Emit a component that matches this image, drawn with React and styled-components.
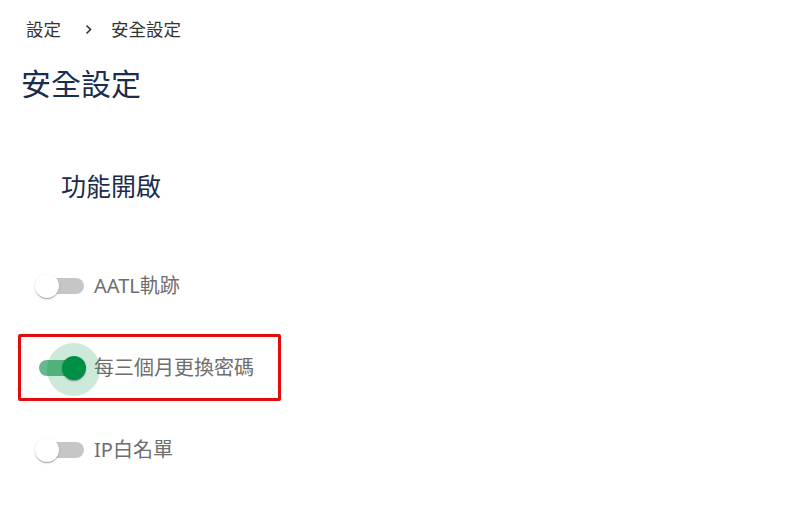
import React, { useState } from 'react';
import styled, { createGlobalStyle } from 'styled-components';

const GlobalStyle = createGlobalStyle`
  html, body {
    margin: 0;
    padding: 0;
    background: #ffffff;
  }
  body {
    font-family: "Noto Sans", "Noto Sans CJK TC", sans-serif;
  }
`;

const Page = styled.div`
  width: 787px;
  min-height: 517px;
  display: flex;
  flex-direction: column;
`;

const Breadcrumb = styled.nav`
  display: flex;
  align-items: center;
  padding: 17px 0 0 26px;
  height: 24px;
  font-size: 17.5px;
  line-height: 24px;
  color: #333333;
`;

const Crumb = styled.span`
  white-space: nowrap;
`;

const Separator = styled.span`
  display: flex;
  align-items: center;
  margin: 0 18px 0 24px;
`;

const Title = styled.h1`
  margin: 23px 0 0 21px;
  font-size: 30px;
  line-height: 40px;
  font-weight: 400;
  color: #1c2c4c;
`;

const SectionTitle = styled.h2`
  margin: 64px 0 0 61px;
  font-size: 25px;
  line-height: 36px;
  font-weight: 400;
  color: #1c2c4c;
`;

const Options = styled.div`
  display: flex;
  flex-direction: column;
  gap: 15px;
  margin: 48px 0 0 18px;
`;

const Row = styled.label`
  box-sizing: border-box;
  width: 263px;
  height: 67px;
  display: flex;
  align-items: center;
  gap: 10px;
  padding-left: 18px;
  border: 3px solid ${p => (p.$highlighted ? '#e30b0b' : 'transparent')};
  border-radius: 2px;
  cursor: pointer;
`;

const Track = styled.span`
  position: relative;
  flex: none;
  width: 45px;
  height: 16px;
  border-radius: 8px;
  background: ${p => (p.$on ? '#66b98a' : '#c6c6c6')};
`;

const Ripple = styled.span`
  position: absolute;
  left: 8px;
  top: -17px;
  width: 53px;
  height: 53px;
  border-radius: 50%;
  background: rgba(0, 143, 69, 0.2);
`;

const Thumb = styled.span`
  position: absolute;
  top: -4px;
  left: ${p => (p.$on ? '23px' : '-4px')};
  width: 24px;
  height: 24px;
  border-radius: 50%;
  background: ${p => (p.$on ? '#008f45' : '#ffffff')};
  box-shadow: 0 2px 1px -1px rgba(0, 0, 0, 0.2), 0 1px 1px 0 rgba(0, 0, 0, 0.14),
    0 1px 3px 0 rgba(0, 0, 0, 0.12);
`;

const Label = styled.span`
  font-size: 20px;
  line-height: 28px;
  color: #6e6e6e;
  white-space: nowrap;
`;

function Switch({ on, focused }) {
  return (
    <Track $on={on}>
      {focused && <Ripple />}
      <Thumb $on={on} />
    </Track>
  );
}

const OPTIONS = [
  { id: 'aatl', label: 'AATL軌跡', on: false },
  { id: 'pwd', label: '每三個月更換密碼', on: true, highlighted: true },
  { id: 'ip', label: 'IP白名單', on: false },
];

export default function App() {
  const [options, setOptions] = useState(OPTIONS);

  const toggle = id => {
    setOptions(options.map(o => (o.id === id ? { ...o, on: !o.on } : o)));
  };

  return (
    <Page>
      <GlobalStyle />
      <Breadcrumb>
        <Crumb>設定</Crumb>
        <Separator>
          <svg width="8" height="11" viewBox="0 0 8 11">
            <polyline points="1.5,1.5 5.5,5.5 1.5,9.5" fill="none" stroke="#333" strokeWidth="1.6" />
          </svg>
        </Separator>
        <Crumb>安全設定</Crumb>
      </Breadcrumb>
      <Title>安全設定</Title>
      <SectionTitle>功能開啟</SectionTitle>
      <Options>
        {options.map(o => (
          <Row key={o.id} $highlighted={o.highlighted} onClick={() => toggle(o.id)}>
            <Switch on={o.on} focused={o.highlighted} />
            <Label>{o.label}</Label>
          </Row>
        ))}
      </Options>
    </Page>
  );
}
